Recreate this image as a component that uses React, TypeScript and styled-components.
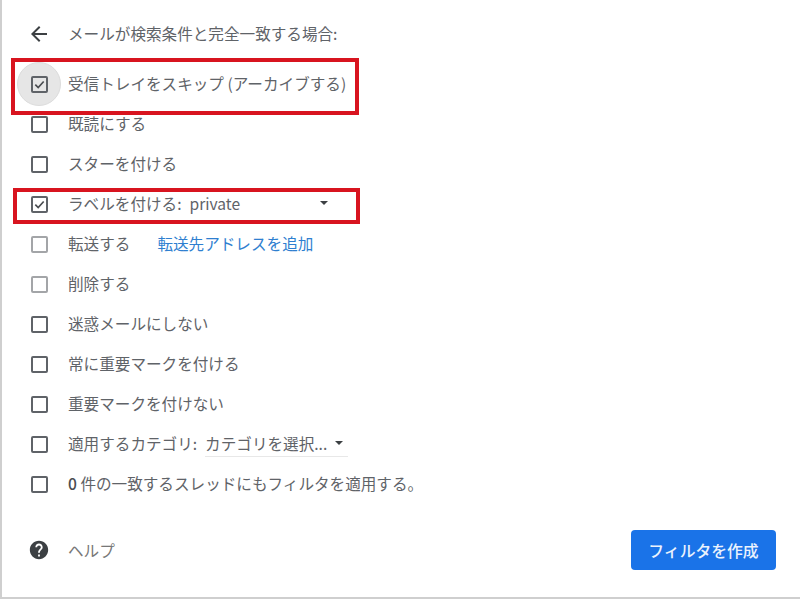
import styled, { createGlobalStyle } from "styled-components";

const GlobalStyle = createGlobalStyle`
  html, body {
    margin: 0;
    padding: 0;
    background: #fff;
  }
`;

const Page = styled.div`
  width: 800px;
  height: 599px;
  box-sizing: border-box;
  display: flex;
  flex-direction: column;
  padding: 14px 24px 27px 29px;
  background: #fff;
  border-left: 2px solid #cfcfcf;
  border-bottom: 2px solid #cfcfcf;
  overflow: hidden;
  color: #5f6368;
  font-family: "Noto Sans CJK JP", "Noto Sans", sans-serif;
  font-size: 15.6px;
`;

const Header = styled.div`
  display: flex;
  align-items: center;
  gap: 17px;
  height: 40px;
  margin-bottom: 10px;
`;

const BackIcon = styled.svg`
  width: 24px;
  height: 24px;
  flex-shrink: 0;
  margin-left: -4px;
  fill: #3c4043;
`;

const Row = styled.div`
  position: relative;
  display: flex;
  align-items: center;
  height: 40px;
  white-space: nowrap;
`;

const Label = styled.span`
  position: relative;
  display: flex;
  align-items: center;
  margin-top: -2px;
`;

const Box = styled.span<{ $faded?: boolean }>`
  position: relative;
  display: flex;
  align-items: center;
  justify-content: center;
  width: 17px;
  height: 17px;
  box-sizing: border-box;
  flex-shrink: 0;
  margin-right: 20px;
  border: 2px solid ${(p) => (p.$faded ? "#a3a5a8" : "#5f6368")};
  border-radius: 2px;
`;

const Ripple = styled.span`
  position: absolute;
  left: -14px;
  top: 50%;
  width: 44px;
  height: 44px;
  margin-top: -22px;
  border-radius: 50%;
  background: #e6e6e6;
  border: 1px solid #dcdcdc;
  box-sizing: border-box;
`;

const Tick = styled.svg`
  width: 13px;
  height: 13px;
  fill: none;
  stroke: #4a4d51;
  stroke-width: 1.8;
`;

const Frame = styled.div<{ $left: number; $top: number; $width: number; $height: number }>`
  position: absolute;
  left: ${(p) => p.$left}px;
  top: ${(p) => p.$top}px;
  width: ${(p) => p.$width}px;
  height: ${(p) => p.$height}px;
  box-sizing: border-box;
  border: 4px solid #d8141f;
  pointer-events: none;
`;

const Select = styled.span<{ $width: number; $line?: boolean }>`
  display: flex;
  align-items: center;
  justify-content: space-between;
  box-sizing: border-box;
  width: ${(p) => p.$width}px;
  height: 27px;
  margin-left: 8px;
  padding-right: 5px;
  border-bottom: 1px solid ${(p) => (p.$line ? "#e8e8e8" : "transparent")};
`;

const Caret = styled.span`
  width: 0;
  height: 0;
  border-left: 4px solid transparent;
  border-right: 4px solid transparent;
  border-top: 4px solid #3c4043;
`;

const LinkText = styled.a`
  margin-left: 27px;
  color: #2f7fd0;
`;

const Bold = styled.span`
  font-weight: 500;
  color: #4a4d51;
`;

const Footer = styled.div`
  display: flex;
  align-items: center;
  margin-top: auto;
`;

const HelpIcon = styled.svg`
  width: 22px;
  height: 22px;
  margin-left: -3px;
  margin-right: 18px;
  fill: #3c4043;
`;

const HelpText = styled.span`
  color: #777;
  flex: 1;
`;

const CreateButton = styled.button`
  width: 145px;
  height: 40px;
  border: 0;
  border-radius: 4px;
  background: #1a73e8;
  color: #eaf2fd;
  font-family: inherit;
  font-size: 15.8px;
  font-weight: 500;
`;

const Check = () => (
  <Tick viewBox="0 0 14 14">
    <path d="M2.5 7.2 5.6 10.3 11.5 3.8" />
  </Tick>
);

const plainRows = ["迷惑メールにしない", "常に重要マークを付ける", "重要マークを付けない"];

function App() {
  return (
    <>
      <GlobalStyle />
      <Page>
        <Header>
          <BackIcon viewBox="0 0 24 24">
            <path d="M20 11H7.83l5.59-5.59L12 4l-8 8 8 8 1.41-1.41L7.83 13H20v-2z" />
          </BackIcon>
          <Label>メールが検索条件と完全一致する場合:</Label>
        </Header>

        <Row>
          <Ripple />
          <Box>
            <Check />
          </Box>
          <Label>受信トレイをスキップ (アーカイブする)</Label>
          <Frame $left={-20} $top={-6} $width={348} $height={57} />
        </Row>
        <Row>
          <Box />
          <Label>既読にする</Label>
        </Row>
        <Row>
          <Box />
          <Label>スターを付ける</Label>
        </Row>
        <Row>
          <Box>
            <Check />
          </Box>
          <Label>
            ラベルを付ける:
            <Select $width={143}>
              private
              <Caret />
            </Select>
          </Label>
          <Frame $left={-18} $top={4} $width={347} $height={36} />
        </Row>
        <Row>
          <Box $faded />
          <Label>
            転送する
            <LinkText>転送先アドレスを追加</LinkText>
          </Label>
        </Row>
        <Row>
          <Box $faded />
          <Label>削除する</Label>
        </Row>
        {plainRows.map((text) => (
          <Row key={text}>
            <Box />
            <Label>{text}</Label>
          </Row>
        ))}
        <Row>
          <Box />
          <Label>
            適用するカテゴリ:
            <Select $width={143} $line>
              カテゴリを選択...
              <Caret />
            </Select>
          </Label>
        </Row>
        <Row>
          <Box />
          <Label>
            <Bold>0</Bold>&nbsp;件の一致するスレッドにもフィルタを適用する。
          </Label>
        </Row>

        <Footer>
          <HelpIcon viewBox="0 0 24 24">
            <path d="M12 2C6.48 2 2 6.48 2 12s4.48 10 10 10 10-4.48 10-10S17.52 2 12 2zm1 17h-2v-2h2v2zm2.07-7.75-.9.92C13.45 12.9 13 13.5 13 15h-2v-.5c0-1.1.45-2.1 1.17-2.83l1.24-1.26c.37-.36.59-.86.59-1.41 0-1.1-.9-2-2-2s-2 .9-2 2H8c0-2.21 1.79-4 4-4s4 1.79 4 4c0 .88-.36 1.68-.93 2.25z" />
          </HelpIcon>
          <HelpText>ヘルプ</HelpText>
          <CreateButton>フィルタを作成</CreateButton>
        </Footer>
      </Page>
    </>
  );
}

export default App;
